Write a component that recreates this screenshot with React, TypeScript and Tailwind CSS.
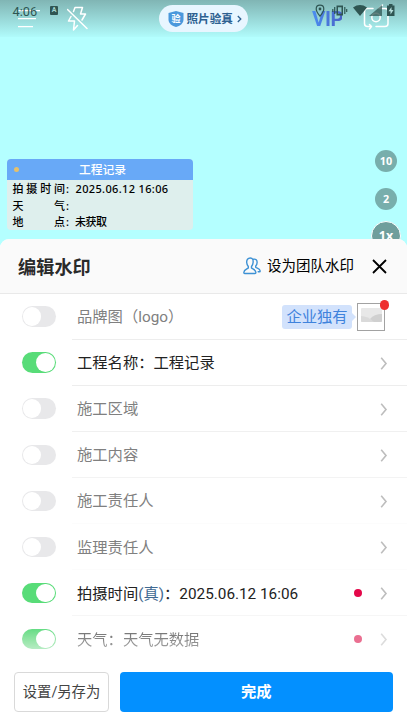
import clsx from 'clsx'

const ROWS = [
  { id: 'name', label: '工程名称：工程记录', on: true, line: 'border-[#ededed]' },
  { id: 'area', label: '施工区域', on: false, line: 'border-[#f0f0f0]' },
  { id: 'content', label: '施工内容', on: false, line: 'border-[#f3f3f3]' },
  { id: 'owner', label: '施工责任人', on: false, line: 'border-[#fcfcfc]' },
  { id: 'supervisor', label: '监理责任人', on: false, line: 'border-[#fcfcfc]' },
  { id: 'time', label: '拍摄时间', verified: '(真)', value: '：2025.06.12 16:06', on: true, dot: true, line: 'border-[#f6f6f6]' },
  { id: 'weather', label: '天气：天气无数据', on: true, muted: true, dot: true, line: 'border-transparent' },
]

const WATERMARK = [
  { label: '拍摄时间', value: '2025.06.12 16:06' },
  { label: '天气', value: '' },
  { label: '地点', value: '未获取' },
]

function StatusBar() {
  return (
    <div className="absolute inset-x-0 top-0 h-6 text-[#2f5552]">
      <span className="absolute left-[12.5px] top-[3px] text-[12.8px] leading-[18px]">4:06</span>
      <span className="absolute left-[50px] top-[6px] flex h-[9px] w-[8px] items-center justify-center rounded-[1px] bg-[#2f5552] text-[7px] font-bold leading-none text-[#a5d6d3]">
        A
      </span>
      <svg className="absolute left-[312px] top-0" width="90" height="22" viewBox="312 0 90 22" fill="currentColor">
        <path d="M320 5.2c-2.2 0-3.8 1.6-3.8 3.8 0 2.7 3.8 7.2 3.8 7.2s3.8-4.5 3.8-7.2c0-2.2-1.6-3.8-3.8-3.8z" fill="none" stroke="currentColor" strokeWidth="1.2" />
        <circle cx="320" cy="9" r="1.4" />
        <path d="M336.500 5.500h6.500v10h-6.500zM338 7.200v6.600h3.500V7.200z" fillRule="evenodd" />
        <path d="M334.700 7v7M332.800 9v3M344.800 7v7M346.700 9v3" stroke="currentColor" strokeWidth="1.2" />
        <path d="M353 7.400q7-4.800 14 0L360 16z" />
        <path d="M382 5v11h-13z" opacity=".75" />
        <path d="M387 5.500h2V4h3.500v1.500h2V16H387z" />
        <path d="M391.500 7l-3 4.200h2V14.500l3-4.500h-2z" fill="#b7dfdc" />
      </svg>
    </div>
  )
}

function CameraToolbar() {
  return (
    <div className="flex h-[37px] items-center pl-[17px]">
      <svg width="23" height="20" viewBox="0 0 23 20" fill="none" stroke="white" strokeWidth="1.3">
        <path d="M1 1.700h22M1 9.700h18M1 17.700h15" />
      </svg>
      <svg className="ml-[27px]" width="22" height="28" viewBox="67 4 22 28" fill="none" stroke="white" strokeWidth="1.5" strokeLinejoin="round" strokeLinecap="round">
        <path d="M73.500 10.500l1.500-4h7.500l-2 6.500h5l-3.500 6M71 15.500l-2.500 4.500h6l-1 9 4-4.500" />
        <path d="M67.500 8.500l19.500 19" />
      </svg>
      <div className="ml-[70px] flex h-[27px] w-[89px] shrink-0 items-center rounded-full bg-[#e8f6ff] pl-[9px] text-[#2d6191]">
        <span className="relative flex h-4 w-4 items-center justify-center">
          <svg className="absolute inset-0" width="16" height="16" viewBox="0 0 16 16" fill="#4a98dc">
            <path d="M8 0l7.500 2v6.500C15.500 12.500 12 15 8 16 4 15 .500 12.500.500 8.500V2z" />
          </svg>
          <span className="relative top-px text-[9px] font-bold leading-none text-white">验</span>
        </span>
        <span className="ml-[2.5px] whitespace-nowrap text-[11.6px] font-bold leading-4">照片验真</span>
        <svg className="ml-[4px]" width="5" height="8" viewBox="0 0 5 8" fill="none" stroke="currentColor" strokeWidth="1.3">
          <path d="M.8 1l3 3-3 3" />
        </svg>
      </div>
      <span className="ml-[64px] w-[30px] bg-gradient-to-r from-[#4a8ef0] to-[#4862c8] bg-clip-text text-[20.5px] font-bold leading-[22px] tracking-[-0.5px] text-transparent">
        VIP
      </span>
      <svg className="mb-[3px] ml-[20px] shrink-0" width="28" height="26" viewBox="362 5 28 26" fill="none" stroke="white" strokeWidth="1.5" strokeLinecap="round" strokeLinejoin="round">
        <path d="M373 9.500h-5.500q-3 0-3 3v12q0 3 3 3h2.500M369.500 25.500l2 2-2 2.500M376 27.500h9q3 0 3-3V12.500q0-3-3-3H379.500M382.500 6l-3.500 3.500" />
        <circle cx="376" cy="18.500" r="4.200" />
      </svg>
    </div>
  )
}

function WatermarkCard() {
  return (
    <div className="absolute left-[7px] top-[158.5px] h-[71.5px] w-[186px] overflow-hidden rounded-[4px] bg-[#deefed] font-['Noto_Sans','Noto_Sans_CJK_SC',sans-serif]">
      <div className="relative flex h-[21.5px] items-center justify-center bg-[#68a9f7] pl-[5px] pt-[2px] text-[11.8px] font-medium text-white">
        <span className="absolute left-[6.5px] top-[8px] h-[5.5px] w-[5.5px] rounded-full bg-[#e5c06c]" />
        工程记录
      </div>
      <div className="pl-[5.5px] pt-px text-[11px] font-medium text-black">
        {WATERMARK.map((line) => (
          <div key={line.label} className="flex h-[16.7px] items-center whitespace-nowrap">
            <span className="flex w-[52.5px] justify-between">
              {line.label.split('').map((ch) => (
                <span key={ch}>{ch}</span>
              ))}
            </span>
            <span className="w-[10.5px] pl-px">:</span>
            <span className={clsx(line.value.startsWith('2') ? 'tracking-[0.35px]' : '-ml-[0.5px] tracking-[-0.5px]')}>{line.value}</span>
          </div>
        ))}
      </div>
    </div>
  )
}

function Toggle({ on, faded }: { on: boolean; faded?: boolean }) {
  return (
    <span
      className={clsx(
        'flex h-[20.5px] w-[34px] shrink-0 items-center rounded-full px-px',
        on ? 'justify-end bg-[#58dc78]' : 'justify-start bg-[#e8e8ea]',
        faded && 'bg-gradient-to-b from-[#64dc84] to-[#b6ecc3]',
      )}
    >
      <span className="h-[18.5px] w-[18.5px] rounded-full bg-white" />
    </span>
  )
}

function Chevron({ faded }: { faded?: boolean }) {
  return (
    <svg className={clsx('mt-[2px]', faded ? 'text-[#dcdcdc]' : 'text-[#bdbdbd]')} width="8" height="13" viewBox="0 0 8 13" fill="none" stroke="currentColor" strokeWidth="1.6">
      <path d="M1.200.800l4.800 5.700-4.800 5.700" />
    </svg>
  )
}

function SheetHeader() {
  return (
    <div className="flex h-[54.5px] shrink-0 items-center border-b border-[#e9e9e9] bg-[#fafafa] pl-[18px] pr-5">
      <h2 className="pt-[3px] text-[18.2px] font-bold text-[#2a2a2a]">编辑水印</h2>
      <div className="ml-auto flex items-center pt-px">
        <svg width="18" height="18" viewBox="0 0 18 18" fill="none" stroke="#3d91d4" strokeWidth="1.4" strokeLinejoin="round" strokeLinecap="round">
          <path d="M7.300 1C4.800 1 3.500 2.800 3.700 5.500c.1 2 .8 3 1.600 4v1.500C4 12.200 1 12.500.8 15.500c0 .7.3 1 .9 1H12c.6 0 .9-.3.9-1-.2-3-3.200-3.300-4.400-4.500V9.500c.8-1 1.500-2 1.600-4C10.300 2.800 9.800 1 7.300 1z" />
          <path d="M10.500 2.200c2.300-.4 3.700.9 3.600 3.300 0 1.700-.6 2.700-1.400 3.500v1.200c1.300 1.200 4.200 1.300 4.500 3.800 0 .6-.2.8-.7.8h-1.300" />
        </svg>
        <span className="ml-[6.5px] pt-[2px] text-[14.5px] text-black">设为团队水印</span>
        <svg className="ml-[18px]" width="15" height="15" viewBox="0 0 15 15" stroke="black" strokeWidth="1.8">
          <path d="M1 1l13 13M14 1L1 14" />
        </svg>
      </div>
    </div>
  )
}

function LogoRow() {
  return (
    <div className="flex h-[46.1px] shrink-0 items-center pl-[21.5px]">
      <Toggle on={false} />
      <div className="ml-[16px] flex h-full flex-1 items-center border-b border-[#ededed] pl-[5.5px] pr-[22px]">
        <span className="pt-[3px] text-[15.3px] text-[#808080]">品牌图（logo）</span>
        <span className="relative ml-auto mt-px flex h-[24px] w-[70px] items-center justify-center rounded-[3px] bg-[#d2e2fc] pt-[2px] text-[15.3px] text-[#3f83dc]">
          企业独有
          <span className="absolute -right-[4px] top-[8px] border-y-4 border-l-4 border-y-transparent border-l-[#d2e2fc]" />
        </span>
        <span className="relative ml-[5px] mt-[2px] flex h-[27.5px] w-[28px] items-center justify-center border border-[#a2a2a2]">
          <svg className="mb-[5px]" width="21" height="14" viewBox="0 0 21 14">
            <rect width="21" height="14" rx="1" fill="#e8e8e8" />
            <path d="M9 11q4-5 12-5v7q0 1-1 1H10z" fill="#d0d0d0" />
            <path d="M0 8q7 0 13 6H1q-1 0-1-1z" fill="#dadada" />
          </svg>
          <span className="absolute -right-[5px] -top-[4px] h-[9.5px] w-[9.5px] rounded-full bg-[#ee3030]" />
        </span>
      </div>
    </div>
  )
}

export default function App() {
  return (
    <div className="relative flex h-[723px] w-[407px] flex-col overflow-hidden bg-[#b4ffff] font-['Roboto','Noto_Sans_CJK_SC',sans-serif]">
      <div className="relative h-[239px] shrink-0">
        <div className="h-[37px] bg-gradient-to-b from-[#80b5b4] to-[#b0fbfb]">
          <CameraToolbar />
        </div>
        <StatusBar />
        <WatermarkCard />
        <div className="absolute left-[371px] top-[150px] flex w-[30px] flex-col items-center font-['Open_Sans',sans-serif] font-bold text-white">
          <span className="flex h-[22px] w-[22px] items-center justify-center rounded-full bg-[#78aeac] pt-px text-[10.8px]">10</span>
          <span className="mt-4 flex h-[22px] w-[22px] items-center justify-center rounded-full bg-[#78aeac] pt-px text-[10.8px]">2</span>
          <span className="mt-[11px] flex h-[30px] w-[30px] items-center justify-center rounded-full border-[1.5px] border-white bg-[#6f9e9c] text-[12.5px]">1x</span>
        </div>
      </div>

      <div className="relative z-10 flex flex-1 flex-col overflow-hidden rounded-t-[9px] bg-white">
        <SheetHeader />
        <LogoRow />
        {ROWS.map((row) => (
          <div key={row.id} className="flex h-[46.1px] shrink-0 items-center pl-[21.5px]">
            <Toggle on={row.on} faded={row.muted} />
            <div className={clsx('ml-[16px] flex h-full flex-1 items-center border-b pl-[5.5px] pr-[19.5px]', row.line)}>
              <span
                className={clsx(
                  'whitespace-nowrap pt-[3px] text-[15.3px]',
                  row.muted
                    ? 'bg-gradient-to-b from-[#666] to-[#aaa] bg-clip-text text-transparent'
                    : row.on
                      ? 'text-[#222]'
                      : 'text-[#808080]',
                )}
              >
                {row.label}
                {row.verified && <span className="text-[#3f6a92]">{row.verified}</span>}
                {row.value}
              </span>
              <span className="ml-auto flex items-center gap-[18px]">
                {row.dot && (
                  <span className={clsx('mt-px h-[8px] w-[8px] rounded-full', row.muted ? 'bg-[#ea6f91]' : 'bg-[#e4084a]')} />
                )}
                <Chevron faded={row.muted} />
              </span>
            </div>
          </div>
        ))}

        <div className="mt-auto flex h-[51px] shrink-0 gap-[11px] pb-[11px] pl-[14px] pr-[14.5px]">
          <button className="h-10 w-[95px] rounded-[4px] border border-[#d9d9d9] bg-white pt-[2px] text-[14.3px] text-[#444]">
            设置/另存为
          </button>
          <button className="h-10 flex-1 rounded-[4px] bg-[#0390ff] pt-px text-[15.3px] font-bold text-white">完成</button>
        </div>
      </div>
    </div>
  )
}
